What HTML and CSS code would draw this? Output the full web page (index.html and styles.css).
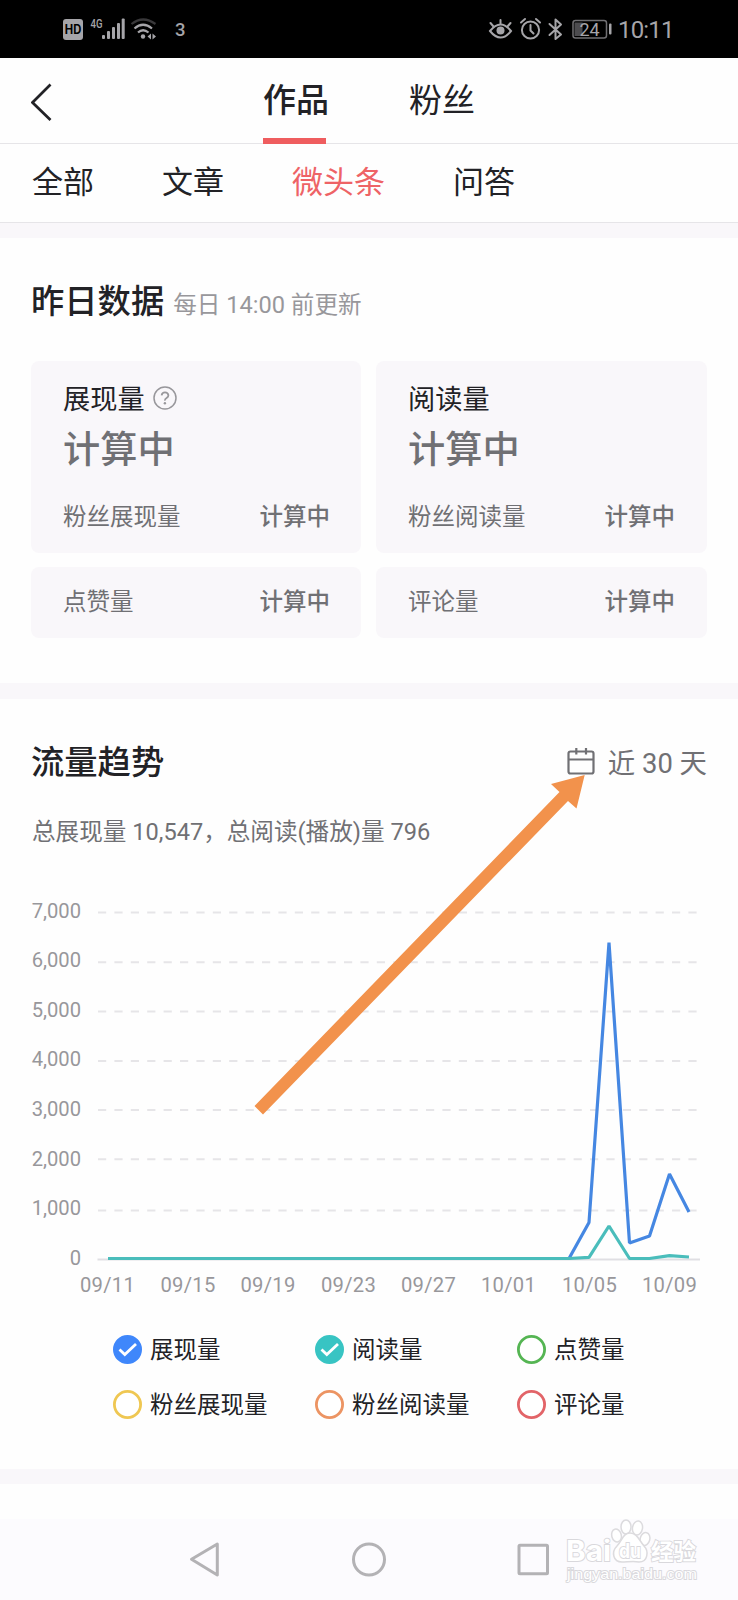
FILE: index.html
```html
<!DOCTYPE html>
<html lang="zh-CN">
<head>
<meta charset="utf-8">
<title>作品数据</title>
<link rel="stylesheet" href="styles.css">
</head>
<body>
<div class="screen">
  <header class="status">
    <svg class="status-left" width="130" height="58" viewBox="60 0 130 58">
      <rect x="63" y="19" width="20" height="21" rx="3" fill="#a6a5a9"/>
      <text x="73" y="34.2" class="hd" text-anchor="middle" textLength="16.5" lengthAdjust="spacingAndGlyphs">HD</text>
      <text x="90.5" y="28" class="net" textLength="12" lengthAdjust="spacingAndGlyphs">4G</text>
      <g fill="#a6a5a9">
        <rect x="102" y="35" width="3" height="4" rx="1"/>
        <rect x="107" y="31" width="3" height="8" rx="1"/>
        <rect x="112" y="27" width="3" height="12" rx="1"/>
        <rect x="117" y="23" width="3" height="16" rx="1"/>
        <rect x="121.700" y="18.500" width="3" height="20.500" rx="1"/>
        <circle cx="143" cy="36.500" r="2.200"/>
        <path d="M151 33.500v6l-3.500-3zM152.500 33.500v6l3.500-3z"/>
      </g>
      <g fill="none" stroke="#a6a5a9" stroke-width="2.200">
        <path d="M138 32.500q5-4.500 10.500 0"/>
        <path d="M134.500 28.500q8.500-7.500 17.500 0"/>
        <path d="M131.500 24q11.500-9 24 0" stroke="#39383a"/>
      </g>
      <text x="175" y="36" class="count">3</text>
    </svg>
    <svg class="status-right" width="200" height="58" viewBox="480 0 200 58">
      <g fill="none" stroke="#a6a5a9" stroke-width="2" stroke-linecap="round">
        <path d="M490 31q10.500-13 21 0q-10.500 13-21 0z"/>
        <path d="M500.500 20v3.500M490.500 23l3 3.500M510.500 23l-3 3.500"/>
        <circle cx="530.500" cy="30" r="8.600"/>
        <path d="M530.500 25v5.500l3 3"/>
        <path d="M521 22.500l4-3.500M540 22.500l-4-3.500"/>
        <path d="M549.500 24l11.500 10.500-5.500 4.500v-19.500l5.500 5-11.500 10.500" stroke-linejoin="round"/>
        <rect x="573" y="20.500" width="33.500" height="17.500" rx="2.500" stroke="#717073" stroke-width="1.500"/>
      </g>
      <circle cx="500.500" cy="30.500" r="4" fill="#a6a5a9"/>
      <rect x="574.500" y="22.500" width="8" height="13.500" fill="#4d4c4f"/>
      <rect x="609" y="23.500" width="2.500" height="11" rx="1" fill="#a6a5a9"/>
      <text x="579.500" y="35.500" class="battery">24</text>
      <text x="618" y="38" class="clock" textLength="56.500">10:11</text>
    </svg>
  </header>

  <nav class="topnav">
    <svg class="back" width="24" height="40" viewBox="0 0 24 40"><path d="M19.500 1.500 1.500 19.500 19.500 37" fill="none" stroke="#222226" stroke-width="2.700"/></svg>
    <div class="tab tab-on">作品</div>
    <div class="tab">粉丝</div>
  </nav>
  <nav class="subnav">
    <span>全部</span><span>文章</span><span class="sub-on">微头条</span><span>问答</span>
  </nav>
  <div class="band band-first"></div>

  <section class="daily">
    <div class="heading">
      <h2>昨日数据</h2><small>每日 14:00 前更新</small>
    </div>
    <div class="cards">
      <div class="card card-big">
        <div class="name">展现量
          <svg width="24" height="24" viewBox="0 0 24 24"><g fill="none" stroke="#98979b" stroke-width="1.500"><circle cx="12" cy="12" r="11"/><path d="M8.600 9.300q.5-3 3.400-3t3.400 2.900q0 1.700-1.800 2.800t-1.700 2.600" stroke-width="1.800"/></g><circle cx="11.900" cy="17.300" r="1.200" fill="#98979b"/></svg>
        </div>
        <div class="value">计算中</div>
        <div class="row"><span>粉丝展现量</span><b>计算中</b></div>
      </div>
      <div class="card card-big">
        <div class="name">阅读量</div>
        <div class="value">计算中</div>
        <div class="row"><span>粉丝阅读量</span><b>计算中</b></div>
      </div>
      <div class="card"><div class="row"><span>点赞量</span><b>计算中</b></div></div>
      <div class="card"><div class="row"><span>评论量</span><b>计算中</b></div></div>
    </div>
  </section>
  <div class="band"></div>

  <section class="trend">
    <div class="trend-head">
      <h2>流量趋势</h2>
      <div class="range">
        <svg width="28" height="27" viewBox="0 0 28 27"><g fill="none" stroke="#707074" stroke-width="2.200"><rect x="1.500" y="3.500" width="25" height="22" rx="2"/><path d="M1.500 11.500h25M9.300 0v6.500M19 0v6.500"/></g></svg>
        <span>近 30 天</span>
      </div>
    </div>
    <p class="summary">总展现量 10,547，总阅读(播放)量 796</p>
    <svg class="chart" width="738" height="430" viewBox="0 880 738 430">
      <g stroke="#e6e5e8" stroke-width="2" stroke-dasharray="8.200 8.200">
        <path d="M98 912.500H698"/><path d="M98 962.300H698"/><path d="M98 1011.600H698"/><path d="M98 1061H698"/>
        <path d="M98 1110H698"/><path d="M98 1159.200H698"/><path d="M98 1210.500H698"/>
      </g>
      <path d="M97.500 1259.500H700" stroke="#e0dfe3" stroke-width="2"/>
      <g class="axis" text-anchor="end">
        <text x="81" y="918.300">7,000</text><text x="81" y="967.300">6,000</text><text x="81" y="1017.300">5,000</text><text x="81" y="1066.300">4,000</text>
        <text x="81" y="1116">3,000</text><text x="81" y="1165.800">2,000</text><text x="81" y="1215">1,000</text><text x="81" y="1265">0</text>
      </g>
      <g class="axis days" text-anchor="middle">
        <text x="107.500" y="1291.700">09/11</text><text x="188" y="1291.700">09/15</text><text x="268" y="1291.700">09/19</text><text x="348.500" y="1291.700">09/23</text>
        <text x="428.500" y="1291.700">09/27</text><text x="508.500" y="1291.700">10/01</text><text x="589.500" y="1291.700">10/05</text><text x="669.500" y="1291.700">10/09</text>
      </g>
      <g fill="none" stroke-width="3.200" stroke-linejoin="bevel">
        <path d="M108 1258.500H569L589 1222.500 609 942.500 629.500 1243 649.500 1236 669.500 1174 689 1212" stroke="#4587e2"/>
        <path d="M108 1258.500H569L589 1257.300 609 1226 629.500 1258.500H649.500L669.500 1255.700 689 1257" stroke="#4abdbb"/>
      </g>
    </svg>
    <ul class="legend">
      <li class="blue on"><svg width="29" height="29" viewBox="0 0 29 29"><circle/><path d="M6.500 14.500l5.300 5L23 9"/></svg><span>展现量</span></li>
      <li class="teal on"><svg width="29" height="29" viewBox="0 0 29 29"><circle/><path d="M6.500 14.500l5.300 5L23 9"/></svg><span>阅读量</span></li>
      <li class="green"><svg width="29" height="29"><circle/></svg><span>点赞量</span></li>
      <li class="yellow"><svg width="29" height="29"><circle/></svg><span>粉丝展现量</span></li>
      <li class="orange"><svg width="29" height="29"><circle/></svg><span>粉丝阅读量</span></li>
      <li class="red"><svg width="29" height="29"><circle/></svg><span>评论量</span></li>
    </ul>
  </section>
  <div class="band band-last"></div>
  <div class="blank"></div>

  <footer class="sysnav">
    <svg width="738" height="81" viewBox="0 1519 738 81">
      <g fill="none" stroke="#b3b2b5" stroke-width="3" stroke-linejoin="round">
        <path d="M217.300 1544 191.500 1559.300 217.300 1575z"/>
        <circle cx="369" cy="1559.500" r="15.500"/>
        <rect x="519" y="1545.300" width="28.500" height="28.500" rx="1"/>
      </g>
    </svg>
  </footer>

  <svg class="arrow" width="332" height="342" viewBox="254 774 332 342"><path d="M584.700 775 551 784 559.500 792 254.500 1106 263 1114.500 568 801 576.500 808.500z" fill="#f2924c"/></svg>

  <svg class="watermark" width="150" height="76" viewBox="560 1515 150 76">
    <g fill="#fff" stroke="#dcdbde" stroke-width="1.500">
      <ellipse cx="616.500" cy="1535.500" rx="4.800" ry="6.500" transform="rotate(-15 616.500 1535.500)"/>
      <ellipse cx="626" cy="1527" rx="5" ry="7"/>
      <ellipse cx="637.500" cy="1528" rx="5" ry="7" transform="rotate(10 637.500 1528)"/>
      <ellipse cx="645" cy="1539" rx="4.800" ry="6.500" transform="rotate(15 645 1539)"/>
      <path d="M630 1533c-7 0-8 8-13 13-6 6-4 16 5 16 5 0 12-1 17 0 9 0 10-11 5-16-5-6-7-13-14-13z"/>
    </g>
    <g class="mark">
      <text x="566" y="1561" class="mark-bai" textLength="45" lengthAdjust="spacingAndGlyphs">Bai</text>
      <text x="619" y="1558" class="mark-du" textLength="22" lengthAdjust="spacingAndGlyphs">du</text>
      <text x="651" y="1559.500" class="mark-jy" textLength="45" lengthAdjust="spacingAndGlyphs">经验</text>
      <text x="567" y="1579" class="mark-url" textLength="130" lengthAdjust="spacingAndGlyphs">jingyan.baidu.com</text>
    </g>
  </svg>
</div>
</body>
</html>
```
FILE: styles.css
```css
* { box-sizing: border-box; }
body {
  margin: 0;
  background: #fff;
  color: #222226;
  font-family: Roboto, "Noto Sans CJK SC", sans-serif;
}
h2, p, ul { margin: 0; padding: 0; }
svg { display: block; flex: none; }
.screen {
  position: relative;
  width: 738px;
  height: 1600px;
  overflow: hidden;
  background: #fefefe;
}

.status {
  display: flex;
  justify-content: space-between;
  height: 58px;
  padding: 0 58px 0 60px;
  background: #000;
}
.hd { font: 700 12.500px Inter, sans-serif; fill: #000; }
.net { font: 500 12.500px Roboto, sans-serif; fill: #a6a5a9; }
.count { font: 500 18.500px Roboto, sans-serif; fill: #a6a5a9; }
.battery { font: 400 18px Roboto, sans-serif; fill: #a6a5a9; }
.clock { font: 400 24px Roboto, sans-serif; fill: #a6a5a9; }

.topnav {
  display: flex;
  height: 86px;
  padding-left: 31px;
  border-bottom: 1px solid #e6e5e8;
}
.back { margin: 25px 208px 0 0; }
.tab {
  height: 86px;
  margin-right: 80px;
  font-size: 33px;
  line-height: 86px;
}
.tab-on {
  width: 63px;
  margin-right: 83px;
  border-bottom: 6px solid #ef5d5f;
  font-weight: 500;
  white-space: nowrap;
}
.subnav {
  display: flex;
  gap: 68px;
  height: 78px;
  padding-left: 32px;
  font-size: 31px;
  line-height: 78px;
}
.sub-on { color: #ee6366; }
.band { height: 16px; background: #f9f7fa; }
.band-first { border-top: 1px solid #e6e5e8; }
.band-last { height: 15px; }

.daily { height: 445px; padding: 39px 31px 0; }
.heading {
  display: flex;
  align-items: baseline;
  height: 84px;
  line-height: 50px;
}
h2 { font-size: 33.300px; font-weight: 500; }
small { margin-left: 9px; font-size: 23.600px; color: #98979b; }
.cards {
  display: grid;
  grid-template-columns: 330px 331px;
  grid-template-rows: 192px 71px;
  gap: 14px 15px;
}
.card {
  padding: 17px 32px 0 32px;
  border-radius: 8px;
  background: #f9f7fa;
}
.card-big { padding-top: 18px; }
.card:nth-child(odd) { padding-right: 31px; }
.name {
  display: flex;
  align-items: center;
  gap: 8px;
  height: 36px;
  font-size: 27.200px;
}
.name svg { margin-top: 2px; }
.value {
  height: 60px;
  margin-top: 5px;
  font-size: 37.200px;
  font-weight: 500;
  line-height: 60px;
  color: #707074;
}
.row {
  display: flex;
  justify-content: space-between;
  height: 36px;
  font-size: 23.500px;
  line-height: 36px;
  color: #707074;
}
.card-big .row { margin-top: 19px; }
.row b { font-weight: 500; }

.trend { height: 770px; padding-top: 30px; }
.trend-head {
  display: flex;
  align-items: center;
  justify-content: space-between;
  height: 60px;
  margin: 0 31px;
}
.range {
  display: flex;
  align-items: center;
  gap: 13px;
  margin-top: 4px;
  font-size: 27.400px;
  color: #707074;
}
.summary {
  height: 48px;
  margin: 19px 0 24px 32px;
  font-size: 23.600px;
  line-height: 48px;
  color: #707074;
}
.axis { font-size: 20.200px; fill: #98979b; }
.days { letter-spacing: .3px; }
.legend {
  display: grid;
  grid-template-columns: repeat(3, 202px);
  grid-template-rows: 29px 29px;
  row-gap: 26px;
  padding: 25px 0 0 113px;
  list-style: none;
}
.legend li {
  display: flex;
  align-items: center;
  gap: 8px;
  font-size: 23.500px;
  line-height: 29px;
}
.legend span { padding-top: 2px; }
.legend circle {
  cx: 14.500px;
  cy: 14.500px;
  r: 13.100px;
  fill: #fff;
  stroke: currentColor;
  stroke-width: 2.800px;
}
.legend .on circle { fill: currentColor; }
.legend path { fill: none; stroke: #fff; stroke-width: 2.800px; }
.blue svg { color: #3f87fb; }
.teal svg { color: #38c4c3; }
.green svg { color: #55b553; }
.yellow svg { color: #efc752; }
.orange svg { color: #ec9463; }
.red svg { color: #e26468; }

.blank { height: 35px; }
.sysnav { height: 81px; background: #fcfbfe; }

.arrow { position: absolute; left: 254px; top: 774px; }
.watermark { position: absolute; left: 560px; top: 1515px; }
.mark { fill: #fff; stroke: #d9d8dc; stroke-width: 1.800px; paint-order: stroke; }
.mark-bai { font: 700 29px Inter, sans-serif; }
.mark-du { font: 700 20px Inter, sans-serif; }
.mark-jy { font: 700 23px "Noto Sans CJK SC", sans-serif; }
.mark-url { font: 400 15px "Liberation Sans", sans-serif; }
```
